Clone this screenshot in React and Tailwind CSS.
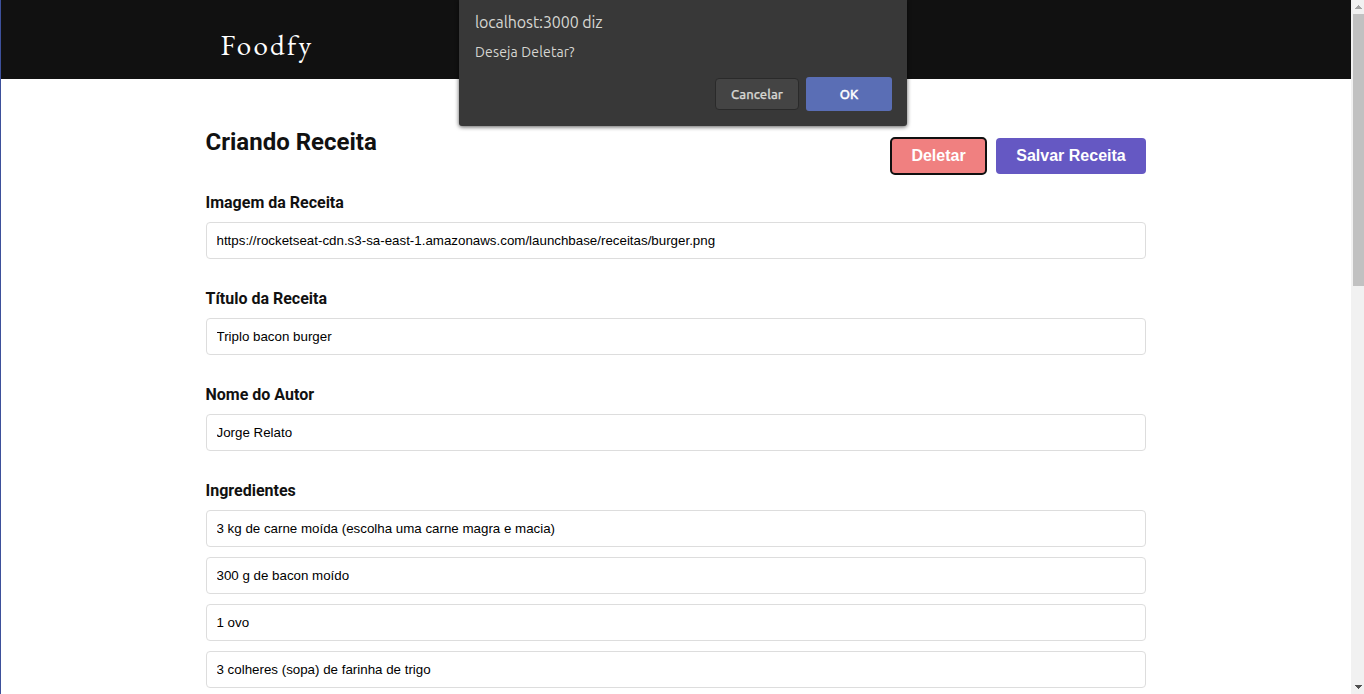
const fields = [
  { label: "Imagem da Receita", value: "https://rocketseat-cdn.s3-sa-east-1.amazonaws.com/launchbase/receitas/burger.png" },
  { label: "Título da Receita", value: "Triplo bacon burger" },
  { label: "Nome do Autor", value: "Jorge Relato" },
];

const ingredients = [
  "3 kg de carne moída (escolha uma carne magra e macia)",
  "300 g de bacon moído",
  "1 ovo",
  "3 colheres (sopa) de farinha de trigo",
];

function Input({ value }) {
  return (
    <input
      defaultValue={value}
      className="block h-[37px] w-full shrink-0 rounded-[4px] border border-[#dddddd] bg-white px-[10px] font-['Liberation_Sans',sans-serif] text-[13.333px] text-black outline-none"
    />
  );
}

function Label({ children }) {
  return (
    <h4 className="mb-[9px] h-[21px] pt-px text-[16px] leading-[20px] font-bold whitespace-nowrap">{children}</h4>
  );
}

function Dialog() {
  return (
    <div className="absolute top-0 left-[459px] flex h-[126px] w-[448px] flex-col rounded-b-[3px] bg-[#383838] px-4 font-['Ubuntu','Noto_Sans',sans-serif] text-[#d6d6d2] shadow-[0_1px_4px_rgba(0,0,0,0.65)]">
      <p className="mt-[10px] h-6 text-[16px] leading-6 tracking-[-0.11px] whitespace-nowrap">localhost:3000 diz</p>
      <p className="mt-[8px] h-5 text-[14px] leading-5 tracking-[0.15px] whitespace-nowrap">Deseja Deletar?</p>
      <div className="mt-[15px] -mr-px flex items-center justify-end gap-[7px]">
        <button className="h-[32px] w-[84px] rounded-[4px] border border-[#2a2a2a] bg-[#444444] pt-px text-[13px] font-medium tracking-[0.05px] [-webkit-text-stroke:0.25px_#d6d6d2]">Cancelar</button>
        <button className="h-[34px] w-[86px] rounded-[3px] bg-[#5a6eb5] pt-px text-[13px] font-medium text-white [-webkit-text-stroke:0.4px_white]">OK</button>
      </div>
    </div>
  );
}

function Scrollbar() {
  return (
    <div className="flex w-[13px] shrink-0 flex-col bg-[#f1f1f1]">
      <svg className="h-[14px] w-[13px]" viewBox="0 0 13 14" shapeRendering="crispEdges">
        <path d="M4 9V8h1V7h1V6h1V5h1v1h1v1h1v1h1v1z" fill="#a3a3a3" />
      </svg>
      <div className="ml-[2px] h-[272px] bg-[#c1c1c1]" />
      <svg className="mt-auto h-[14px] w-[13px]" viewBox="0 0 13 14" shapeRendering="crispEdges">
        <path d="M4 5v1h1v1h1v1h1v1h1V8h1V7h1V6h1V5z" fill="#505050" />
      </svg>
    </div>
  );
}

export default function App() {
  return (
    <div className="relative flex h-[694px] w-[1364px] overflow-hidden bg-white font-['Roboto',sans-serif] text-[#111111]">
      <div className="flex min-w-0 flex-1 flex-col">
        <header className="flex h-[79px] shrink-0 items-center bg-[#111111] pl-[220.5px]">
          <span className="mt-[11px] font-['EB_Garamond','Liberation_Serif',serif] text-[29px] leading-8 tracking-[2.3px] text-white">Foodfy</span>
        </header>
        <main className="mx-auto flex w-[940px] flex-col">
          <div className="flex h-[113px] justify-between pt-[48px]">
            <h1 className="h-[30px] text-[24px] leading-[30px] font-bold">Criando Receita</h1>
            <div className="mt-[11px] flex h-[36px] gap-[10px] font-['Liberation_Sans',sans-serif] text-[16px] font-bold text-white">
              <button className="w-[95px] rounded-[4px] bg-[#f08080] pl-px outline-2 -outline-offset-1 outline-[#101010]">Deletar</button>
              <button className="w-[150px] rounded-[4px] bg-[#6558c3] pl-px">Salvar Receita</button>
            </div>
          </div>
          {fields.map((f) => (
            <div key={f.label} className="mb-[29px]">
              <Label>{f.label}</Label>
              <Input value={f.value} />
            </div>
          ))}
          <Label>Ingredientes</Label>
          <div className="flex flex-col gap-[10px]">
            {ingredients.map((v) => (
              <Input key={v} value={v} />
            ))}
          </div>
        </main>
      </div>
      <Scrollbar />
      <div className="absolute top-0 left-0 h-full w-px bg-[#3d509b]" />
      <Dialog />
    </div>
  );
}
